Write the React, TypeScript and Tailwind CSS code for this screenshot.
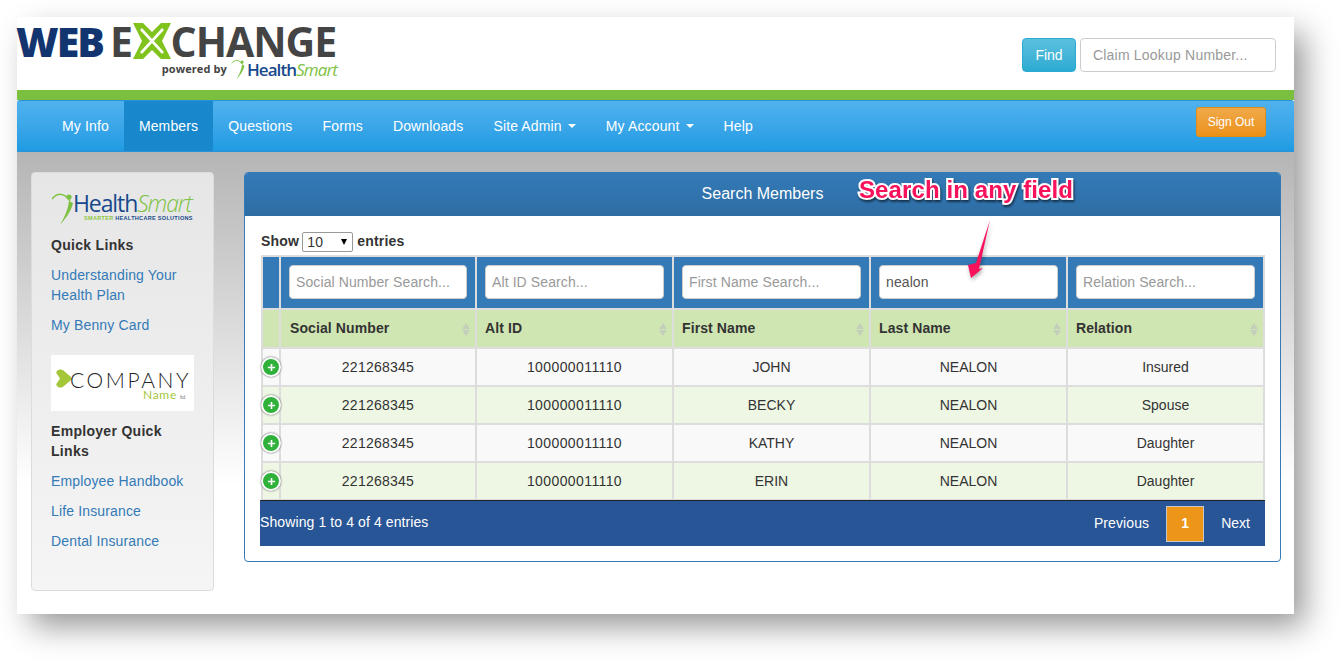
const members = [
  { first: "JOHN", relation: "Insured" },
  { first: "BECKY", relation: "Spouse" },
  { first: "KATHY", relation: "Daughter" },
  { first: "ERIN", relation: "Daughter" },
]

const columns = [
  { label: "Social Number", placeholder: "Social Number Search..." },
  { label: "Alt ID", placeholder: "Alt ID Search..." },
  { label: "First Name", placeholder: "First Name Search..." },
  { label: "Last Name", placeholder: "Last Name Search...", value: "nealon" },
  { label: "Relation", placeholder: "Relation Search..." },
]

const navItems = [
  { label: "My Info" },
  { label: "Members", active: true },
  { label: "Questions" },
  { label: "Forms" },
  { label: "Downloads" },
  { label: "Site Admin", caret: true },
  { label: "My Account", caret: true },
  { label: "Help" },
]

function Figure({ className }: { className: string }) {
  return (
    <svg viewBox="0 0 24 34" className={className} fill="none">
      <path d="M0 7C5 1 12 0 18 9" stroke="#7dc242" strokeWidth="1.5" />
      <circle cx="17" cy="5" r="2.6" fill="#7dc242" />
      <path d="M17 9C16 18 12 26 8 33C13 27 19 20 21 11Z" fill="#7dc242" />
    </svg>
  )
}

function ExchangeX() {
  return (
    <svg viewBox="0 0 38 36" className="w-[38px] h-[36px] shrink-0">
      <path d="M0 0H10L19 9L28 0H38L29 18L38 36H28L19 27L10 36H0L9 18Z" fill="#7fc31c" />
      <path d="M8 6L30 30M30 6L8 30" stroke="#ffffff" strokeWidth="2.6" />
    </svg>
  )
}

function SortIcon() {
  return (
    <span className="absolute right-[5px] top-[13px] flex flex-col gap-[1px]">
      <span className="w-0 h-0 border-x-4 border-x-transparent border-b-[6px] border-b-[#c3cfba]" />
      <span className="w-0 h-0 border-x-4 border-x-transparent border-t-[6px] border-t-[#c3cfba]" />
    </span>
  )
}

function Caret() {
  return <span className="inline-block ml-[6px] align-middle w-0 h-0 border-x-4 border-x-transparent border-t-4 border-t-white" />
}

function Sidebar() {
  return (
    <aside className="w-[183px] h-[419px] shrink-0 rounded border border-[#dcdcdc] bg-linear-to-b from-[#e6e6e6] to-[#f5f5f5] pl-[19px] pr-[19px] pt-[17px] text-[14px] leading-[20px]">
      <div className="h-[37px] w-[143px] relative">
        <Figure className="absolute left-[1px] top-[2px] w-[24px] h-[34px]" />
        <div className="pl-[22px] pt-[1px] font-['Open_Sans',sans-serif] text-[23px] leading-[24px] tracking-[-1.1px] text-[#17498c] whitespace-nowrap">
          Health<span className="italic font-light text-[#7dc242]">Smart</span>
        </div>
        <div className="absolute left-[33px] top-[25px] whitespace-nowrap text-[5.5px] leading-[6px] font-bold tracking-[0.32px] text-[#17498c]">
          <span className="text-[#8cc63f]">SMARTER</span> HEALTHCARE SOLUTIONS
        </div>
      </div>
      <h4 className="mt-[8px] font-bold text-[#333] tracking-[0.3px]">Quick Links</h4>
      <a className="block mt-[10px] text-[#337ab7] tracking-[0.15px]">Understanding Your Health Plan</a>
      <a className="block mt-[10px] text-[#337ab7] tracking-[0.15px]">My Benny Card</a>
      <div className="mt-[20px] h-[56px] bg-white relative">
        <svg viewBox="0 0 16 19" className="absolute left-[5px] top-[14px] w-[16px] h-[19px]">
          <path d="M1 2C3 0 6 0 8 2L15 8C16 9 16 10 15 11L8 17C6 19 3 19 1 17C0 16 0 15 1 14L3 11C4 10 4 9 3 8L1 5C0 4 0 3 1 2Z" fill="#a4c639" />
        </svg>
        <div className="absolute left-[19px] top-[13px] font-['Lato',sans-serif] font-light text-[21px] leading-[24px] tracking-[2.6px] text-[#222] whitespace-nowrap">COMPANY</div>
        <div className="absolute left-[92px] top-[33px] font-['Lato',sans-serif] text-[12px] leading-[14px] tracking-[0.7px] text-[#a4c639]">Name</div>
        <div className="absolute left-[129px] top-[39px] text-[5px] leading-[6px] text-[#777]">ltd</div>
      </div>
      <h4 className="mt-[10px] font-bold text-[#333] tracking-[0.3px]">Employer Quick Links</h4>
      <a className="block mt-[10px] text-[#337ab7] tracking-[0.15px]">Employee Handbook</a>
      <a className="block mt-[10px] text-[#337ab7] tracking-[0.15px]">Life Insurance</a>
      <a className="block mt-[10px] text-[#337ab7] tracking-[0.15px]">Dental Insurance</a>
    </aside>
  )
}

function MembersTable() {
  return (
    <table className="table-fixed border-collapse w-[1004px] ml-[1px] text-[14px] text-[#333]">
      <colgroup>
        <col className="w-[18px]" />
        <col className="w-[196px]" />
        <col className="w-[197px]" />
        <col className="w-[197px]" />
        <col className="w-[197px]" />
        <col className="w-[197px]" />
      </colgroup>
      <thead>
        <tr className="h-[53px] bg-[#337ab7]">
          <th className="border-2 border-[#ddd] border-b-0" />
          {columns.map((c) => (
            <th key={c.label} className="border-2 border-[#ddd] border-b-0 px-[8px] pb-[2px]">
              <input
                readOnly
                value={c.value ?? ""}
                placeholder={c.placeholder}
                className="w-full h-[34px] px-[6px] rounded bg-white border border-[#ccc] text-[14px] font-normal text-[#555] tracking-[0.1px] placeholder:text-[#999] outline-none font-['Liberation_Sans',sans-serif]"
              />
            </th>
          ))}
        </tr>
        <tr className="h-[39px] bg-[#d0e6b2]">
          <th className="border-2 border-[#ddd]" />
          {columns.map((c, i) => (
            <th key={c.label} className={i === 0 ? "relative border-2 border-[#ddd] pl-[9px] text-left font-bold tracking-[0.1px]" : "relative border-2 border-[#ddd] pl-[8px] text-left font-bold tracking-[0.1px]"}>
              {c.label}
              <SortIcon />
            </th>
          ))}
        </tr>
      </thead>
      <tbody>
        {members.map((m, i) => (
          <tr key={m.first} className={i % 2 === 0 ? "h-[38px] bg-[#f9f9f9]" : "h-[38px] bg-[#eef7e3]"}>
            <td className="relative border-2 border-[#ddd]">
              <span className="absolute left-[-2px] top-[8px] w-[20px] h-[20px] rounded-full bg-[#2fb13a] border-2 border-white shadow-[0_0_2px_#444] flex items-center justify-center">
                <svg viewBox="0 0 10 10" className="w-[9px] h-[9px]">
                  <path d="M5 1V9M1 5H9" stroke="#fff" strokeWidth="1.8" />
                </svg>
              </span>
            </td>
            <td className="border-2 border-[#ddd] text-center tracking-[0.25px]">221268345</td>
            <td className="border-2 border-[#ddd] text-center tracking-[0.4px]">100000011110</td>
            <td className="border-2 border-[#ddd] text-center">{m.first}</td>
            <td className="border-2 border-[#ddd] text-center">NEALON</td>
            <td className="border-2 border-[#ddd] text-center">{m.relation}</td>
          </tr>
        ))}
      </tbody>
    </table>
  )
}

export default function App() {
  return (
    <div className="w-[1342px] h-[662px] bg-white overflow-hidden pl-[17px] pt-[17px] font-['Liberation_Sans',sans-serif]">
      <div className="relative w-[1277px] h-[597px] flex flex-col bg-white shadow-[12px_14px_30px_-2px_rgba(0,0,0,0.42)]">
        {/* Top logo bar */}
        <header className="h-[73px] shrink-0 flex items-start justify-between pr-[18px]">
          <div className="w-[320px] pt-[5px]">
            <div className="flex items-center h-[38px] -ml-[1px] font-['Open_Sans',sans-serif] font-bold text-[41px] leading-[38px]">
              <span className="text-[#12346f] font-extrabold tracking-[-1.9px]">WEB</span>
              <span className="ml-[7px] text-[#444] tracking-[-0.5px]">E</span>
              <ExchangeX />
              <span className="text-[#444] tracking-[-1px]">CHANGE</span>
            </div>
            <div className="flex items-center justify-end h-[21px] -mt-[1px]">
              <span className="font-['Open_Sans',sans-serif] font-bold text-[11px] text-[#444] mr-[4px] tracking-[0.1px]">powered by</span>
              <Figure className="w-[16px] h-[21px]" />
              <span className="font-['Open_Sans',sans-serif] font-semibold text-[17px] leading-[20px] tracking-[-0.9px] text-[#17498c]">Health<span className="italic font-normal text-[#7dc242]">Smart</span></span>
            </div>
          </div>
          <div className="flex gap-[4px] mt-[21px]">
            <button className="w-[54px] h-[34px] rounded border border-[#2aabd2] bg-linear-to-b from-[#5bc0de] to-[#2aabd2] text-white text-[14px]">Find</button>
            <input readOnly placeholder="Claim Lookup Number..." className="w-[196px] h-[34px] px-[12px] rounded border border-[#ccc] text-[14px] tracking-[0.2px] placeholder:text-[#999] outline-none" />
          </div>
        </header>
        <div className="h-[10px] shrink-0 bg-[#7bbf3f]" />

        {/* Nav */}
        <nav className="h-[52px] shrink-0 flex items-stretch justify-between pl-[30px] pr-[28px] bg-linear-to-b from-[#50b2ee] to-[#1e9be3] border-y border-[#2a93d5] rounded-t-[3px]">
          <ul className="flex tracking-[0.14px]">
            {navItems.map((item) => (
              <li key={item.label} className={item.active ? "flex items-center px-[15px] bg-[#1887cb] text-white text-[14px]" : "flex items-center px-[15px] text-white text-[14px]"}>
                {item.label}
                {item.caret && <Caret />}
              </li>
            ))}
          </ul>
          <button className="self-start mt-[6px] w-[70px] h-[30px] rounded-[3px] border border-[#e08e19] bg-linear-to-b from-[#f0a948] to-[#ec9115] text-white text-[12px]">Sign Out</button>
        </nav>

        {/* Content */}
        <main className="flex-1 flex items-start gap-[30px] pl-[14px] pt-[20px] bg-linear-to-b from-[#b5b5b5] to-white to-[72%]">
          <Sidebar />
          <section className="w-[1037px] h-[390px] rounded border border-[#337ab7] bg-white">
            <div className="h-[43px] flex items-center justify-center pb-[2px] rounded-t-[3px] bg-linear-to-b from-[#337ab7] to-[#2e6da4] text-white text-[16px]">
              Search Members
            </div>
            <div className="pl-[15px] pt-[15px]">
              <div className="h-[24px] flex items-center gap-[3px] pl-[1px] pb-[3px] text-[14px] font-bold text-[#333] tracking-[0.2px]">
                Show
                <span className="relative w-[51px] h-[20px] border border-[#999] rounded-[2px] bg-white pl-[4px] leading-[19px] font-normal">
                  10
                  <span className="absolute right-[5px] top-[6px] w-0 h-0 border-x-[3.5px] border-x-transparent border-t-[6px] border-t-black" />
                </span>
                <span className="ml-[1px]">entries</span>
              </div>
              <MembersTable />
              <div className="relative w-[1005px] h-[46px] -mt-[1px] flex items-center justify-between bg-[#285595] border-t border-[#222] text-white text-[14px]">
                <span className="-mt-[2px] tracking-[0.1px]">Showing 1 to 4 of 4 entries</span>
                <div className="flex items-center gap-[17px] pr-[15px]">
                  <span className="tracking-[0.1px]">Previous</span>
                  <span className="w-[38px] h-[36px] flex items-center justify-center bg-[#ec9518] border border-[#c9c9c9] font-bold">1</span>
                  <span>Next</span>
                </div>
              </div>
            </div>
          </section>
        </main>

        {/* Annotation */}
        <div className="absolute left-[842px] top-[157px] whitespace-nowrap text-[24px] leading-[32px] font-bold tracking-[0.1px] text-[#f8125c] [-webkit-text-stroke:4px_white] [paint-order:stroke_fill] [filter:drop-shadow(1px_2px_1px_rgba(0,0,0,0.55))]">
          Search in any field
        </div>
        <svg viewBox="0 0 40 70" className="absolute left-[943px] top-[198px] w-[40px] h-[70px] [filter:drop-shadow(1px_2px_2px_rgba(0,0,0,0.35))]">
          <path d="M30 5L19 54L23 53L11 63L8 50L16 48Z" fill="#f8125c" />
        </svg>
      </div>
    </div>
  )
}
